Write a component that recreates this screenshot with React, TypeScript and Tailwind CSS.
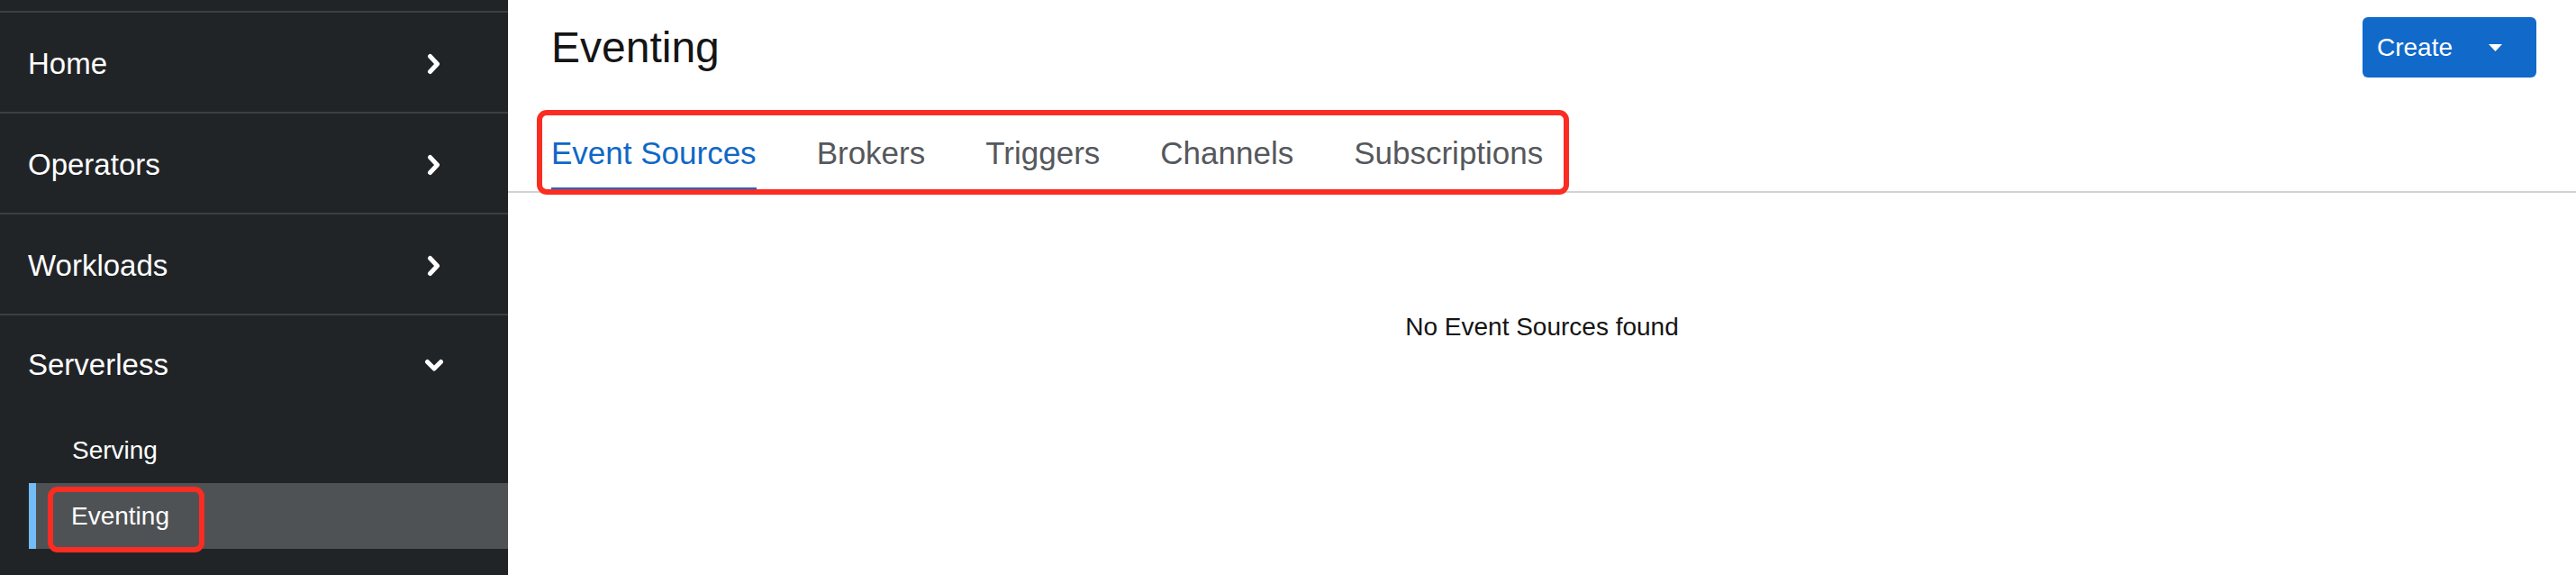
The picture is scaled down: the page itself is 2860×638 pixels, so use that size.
import React from 'react';

const navItems = ['Home', 'Operators', 'Workloads'];
const tabs = ['Event Sources', 'Brokers', 'Triggers', 'Channels', 'Subscriptions'];

// 右箭头
const ChevronRight: React.FC = () => (
  <svg width="16" height="24" viewBox="0 0 16 24" className="shrink-0">
    <polyline
      points="3.5,3.5 11.5,12 3.5,20.5"
      fill="none"
      stroke="#ffffff"
      strokeWidth="5"
      strokeLinecap="round"
      strokeLinejoin="round"
    />
  </svg>
);

// 下箭头
const ChevronDown: React.FC = () => (
  <svg width="22" height="15" viewBox="0 0 22 15" className="shrink-0">
    <polyline
      points="3.5,3.5 11,11 18.5,3.5"
      fill="none"
      stroke="#ffffff"
      strokeWidth="5"
      strokeLinecap="round"
      strokeLinejoin="round"
    />
  </svg>
);

const Sidebar: React.FC = () => {
  return (
    <nav className="w-[564px] shrink-0 bg-[#212427] text-white">
      <div className="h-[12px]" />
      {navItems.map((item) => (
        <div
          key={item}
          className="flex h-[112px] items-center justify-between border-t-2 border-[#3c3f42] pl-[31px] pr-[74px] pt-[3px] text-[33px]"
        >
          <span>{item}</span>
          <ChevronRight />
        </div>
      ))}

      <div className="border-t-2 border-[#3c3f42]">
        <div className="flex h-[110px] items-center justify-between pl-[31px] pr-[71px] text-[33px]">
          <span>Serverless</span>
          <ChevronDown />
        </div>
        <div className="pt-[3px]">
          <div className="flex h-[73px] items-center pl-[80px] text-[28px]">Serving</div>
          <div className="relative ml-[32px] flex h-[73px] items-center border-l-8 border-[#73bcf7] bg-[#4f5255] pl-[39px] text-[28px]">
            <span>Eventing</span>
            {/* 标注框 */}
            <div className="pointer-events-none absolute left-[13px] top-[4px] h-[73px] w-[174px] rounded-[11px] border-[6px] border-[#fb2c22]" />
          </div>
        </div>
      </div>
    </nav>
  );
};

const Eventing: React.FC = () => {
  return (
    <main className="flex-1 bg-white">
      <div className="flex items-start justify-between pl-[48px] pr-[44px] pt-[19px]">
        <h1 className="mt-[10px] text-[48px] leading-[48px] text-[#151515]">Eventing</h1>
        <button className="flex h-[67px] items-center rounded-[6px] bg-[#1169c9] pl-[16px] pr-[38px] text-[28px] text-white">
          <span className="leading-[28px]">Create</span>
          <svg width="15" height="8" viewBox="0 0 15 8" className="ml-[40px]">
            <polygon points="0,0 15,0 7.5,8" fill="#ffffff" />
          </svg>
        </button>
      </div>

      <div className="relative mt-[36px] border-b-2 border-[#d2d2d2]">
        <ul className="flex gap-[67px] pl-[48px]">
          {tabs.map((tab, i) => (
            <li key={tab} className="flex flex-col pt-[30px]">
              <span
                className={
                  i === 0
                    ? 'text-[35px] leading-[35px] text-[#0f68c6]'
                    : 'text-[35px] leading-[35px] text-[#55585c]'
                }
              >
                {tab}
              </span>
              <div className={i === 0 ? 'mt-[21px] h-[4px] bg-[#0f68c6]' : 'mt-[21px] h-[4px]'} />
            </li>
          ))}
        </ul>
        {/* 标注框 */}
        <div className="pointer-events-none absolute left-[32px] top-0 h-[94px] w-[1146px] rounded-[11px] border-[6px] border-[#fb2c22]" />
      </div>

      <p className="mt-[135px] text-center text-[28px] leading-[28px] text-[#151515]">
        No Event Sources found
      </p>
    </main>
  );
};

const App: React.FC = () => {
  return (
    <div className="flex min-h-screen font-['Liberation_Sans',Arial,sans-serif]">
      <Sidebar />
      <Eventing />
    </div>
  );
};

export default App;
